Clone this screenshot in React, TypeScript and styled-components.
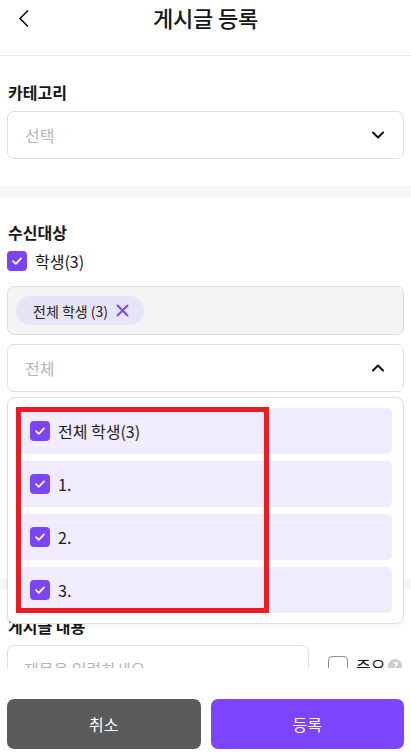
import React from 'react'
import styled, { createGlobalStyle } from 'styled-components'

const GlobalStyle = createGlobalStyle`
  html, body {
    margin: 0;
    padding: 0;
    background: #ffffff;
  }
  body {
    font-family: "Noto Sans CJK KR", "Noto Sans", sans-serif;
    color: #161616;
  }
  * {
    box-sizing: border-box;
  }
`

const PURPLE = '#7b45f6'

const Page = styled.div`
  width: 411px;
  height: 756px;
  display: flex;
  flex-direction: column;
  background: #ffffff;
  overflow: hidden;
`

const Scroll = styled.main`
  flex: 1;
  overflow: hidden;
  position: relative;
`

const Header = styled.header`
  height: 56px;
  display: grid;
  grid-template-columns: 48px 1fr 48px;
  align-items: start;
  border-bottom: 1px solid #ececec;
`

const BackButton = styled.button`
  border: 0;
  background: none;
  padding: 10px 0 0 18px;
  display: flex;
  align-items: flex-start;
  cursor: pointer;
`

const Title = styled.h1`
  margin: 0;
  font-size: 22px;
  font-weight: 500;
  line-height: 34px;
  text-align: center;
  letter-spacing: -0.2px;
`

const Section = styled.section<{ $top: number; $bottom: number }>`
  padding: ${p => p.$top}px 7px ${p => p.$bottom}px;
`

const Band = styled.div<{ $h: number }>`
  height: ${p => p.$h}px;
  background: #f5f6fa;
`

const Label = styled.h2`
  margin: 0 0 10px 1px;
  font-size: 16px;
  font-weight: 700;
  line-height: 18px;
`

const SelectBox = styled.div`
  height: 48px;
  border: 1px solid #dedede;
  border-radius: 7px;
  display: flex;
  align-items: center;
  justify-content: space-between;
  padding: 0 19px 0 17px;
`

const Placeholder = styled.span`
  color: #b5b5b5;
  font-size: 16px;
  white-space: nowrap;
`

const CheckRow = styled.label`
  margin-top: 1px;
  height: 20px;
  display: flex;
  align-items: center;
  gap: 8px;
  font-size: 16px;
`

const Box = styled.span<{ $on?: boolean }>`
  width: 20px;
  height: 20px;
  flex: none;
  border-radius: 4px;
  display: flex;
  align-items: center;
  justify-content: center;
  background: ${p => (p.$on ? PURPLE : '#ffffff')};
  border: ${p => (p.$on ? 'none' : '1.5px solid #8f8f8f')};
`

const ChipArea = styled.div`
  margin-top: 15px;
  height: 49px;
  background: #f4f4f4;
  border: 1px solid #dddddd;
  border-radius: 7px;
  display: flex;
  align-items: center;
  padding: 0 8px;
`

const Chip = styled.span`
  height: 29px;
  border-radius: 15px;
  background: #e8e4f7;
  display: inline-flex;
  align-items: center;
  gap: 8px;
  padding: 0 15px 0 17px;
  font-size: 14px;
  font-weight: 400;
  color: #222;
`

const DropWrap = styled.div`
  position: relative;
  margin-top: 9px;
`

const Panel = styled.div`
  position: absolute;
  top: calc(100% + 5px);
  left: 0;
  right: 0;
  z-index: 10;
  background: #ffffff;
  border: 1px solid #dedede;
  border-radius: 8px;
  box-shadow: 0 2px 6px rgba(0, 0, 0, 0.05);
  padding: 10px 11px 10px 8px;
  display: flex;
  flex-direction: column;
  gap: 7px;
`

const Item = styled.div`
  height: 46px;
  border-radius: 5px;
  background: #f0ecfe;
  display: flex;
  align-items: center;
  gap: 8px;
  padding-left: 14px;
  font-size: 16px;
  color: #1c1c1c;
`

const Marker = styled.div`
  position: absolute;
  top: 9px;
  left: 8px;
  width: 253px;
  height: 206px;
  border: 5px solid #ed1c24;
  pointer-events: none;
`

const ContentRow = styled.div`
  display: flex;
  align-items: flex-start;
`

const TitleInput = styled.div`
  width: 302px;
  flex: none;
  height: 48px;
  border: 1px solid #dedede;
  border-radius: 7px;
  display: flex;
  align-items: center;
  padding-left: 16px;
  margin-right: 19px;
`

const Important = styled.label`
  margin-top: 11px;
  flex: none;
  display: flex;
  align-items: center;
  gap: 8px;
  font-size: 16px;
  line-height: 20px;
  white-space: nowrap;
`

const Help = styled.span`
  width: 14px;
  height: 14px;
  border-radius: 50%;
  background: #cdcdcd;
  color: #fff;
  font-size: 10px;
  font-weight: 700;
  display: flex;
  align-items: center;
  justify-content: center;
  margin-left: -5px;
`

const Footer = styled.footer`
  height: 88px;
  padding: 31px 7px 7px;
  display: grid;
  grid-template-columns: 1fr 1fr;
  gap: 10px;
  background: #ffffff;
`

const FooterButton = styled.button<{ $primary?: boolean }>`
  height: 50px;
  border: 0;
  border-radius: 7px;
  background: ${p => (p.$primary ? '#7c45fb' : '#5b5b5b')};
  color: #ffffff;
  font-family: inherit;
  font-size: 16px;
  font-weight: 400;
`

const Check = () => (
  <svg width="14" height="14" viewBox="0 0 14 14" fill="none">
    <path d="M3 7.2 L5.8 9.8 L11 4.4" stroke="#fff" strokeWidth="1.8" strokeLinecap="round" strokeLinejoin="round" />
  </svg>
)

const Chevron = ({ up }: { up?: boolean }) => (
  <svg width="12" height="8" viewBox="0 0 12 8" fill="none">
    <path d={up ? 'M1 6.5 L6 1.5 L11 6.5' : 'M1 1.5 L6 6.5 L11 1.5'} stroke="#111" strokeWidth="2" strokeLinecap="round" strokeLinejoin="round" />
  </svg>
)

const options = ['전체 학생(3)', '1.', '2.', '3.']

export default function App() {
  return (
    <Page>
      <GlobalStyle />
      <Scroll>
        <Header>
          <BackButton aria-label="뒤로">
            <svg width="11" height="17" viewBox="0 0 11 17" fill="none">
              <path d="M9.5 1 L2 8.5 L9.5 16" stroke="#111" strokeWidth="1.7" strokeLinecap="round" strokeLinejoin="round" />
            </svg>
          </BackButton>
          <Title>게시글 등록</Title>
          <span />
        </Header>

        <Section $top={27} $bottom={27}>
          <Label>카테고리</Label>
          <SelectBox>
            <Placeholder>선택</Placeholder>
            <Chevron />
          </SelectBox>
        </Section>
        <Band $h={11} />

        <Section $top={26} $bottom={187}>
          <Label>수신대상</Label>
          <CheckRow>
            <Box $on><Check /></Box>
            학생(3)
          </CheckRow>
          <ChipArea>
            <Chip>
              전체 학생 (3)
              <svg width="13" height="13" viewBox="0 0 13 13" fill="none">
                <path d="M1.5 1.5 L11.5 11.5 M11.5 1.5 L1.5 11.5" stroke={PURPLE} strokeWidth="1.9" strokeLinecap="round" />
              </svg>
            </Chip>
          </ChipArea>
          <DropWrap>
            <SelectBox>
              <Placeholder>전체</Placeholder>
              <Chevron up />
            </SelectBox>
            <Panel>
              {options.map(o => (
                <Item key={o}>
                  <Box $on><Check /></Box>
                  {o}
                </Item>
              ))}
              <Marker />
            </Panel>
          </DropWrap>
        </Section>
        <Band $h={10} />

        <Section $top={28} $bottom={20}>
          <Label>게시글 내용</Label>
          <ContentRow>
            <TitleInput>
              <Placeholder>제목을 입력하세요</Placeholder>
            </TitleInput>
            <Important>
              <Box />
              중요
              <Help>?</Help>
            </Important>
          </ContentRow>
        </Section>
      </Scroll>
      <Footer>
        <FooterButton>취소</FooterButton>
        <FooterButton $primary>등록</FooterButton>
      </Footer>
    </Page>
  )
}
